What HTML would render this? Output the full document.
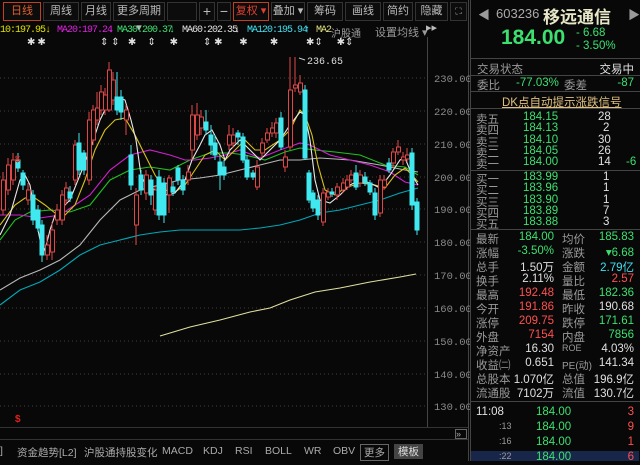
<!DOCTYPE html>
<html><head><meta charset="utf-8"><style>
*{margin:0;padding:0;box-sizing:border-box}
body{width:640px;height:461px;background:#080808;overflow:hidden;position:relative;font-family:"Liberation Sans","Noto Sans CJK SC",sans-serif;font-size:11px;color:#c8c8c8}
.a{position:absolute;white-space:nowrap}
.tb{position:absolute;top:2px;height:19px;border:1px solid #333;background:#0c0c0c;color:#bbb;font-size:11px;line-height:17px;text-align:center}
.r{color:#ff5050}.g{color:#3ce070}.w{color:#e0e0e0}.y{color:#e0e000}.c{color:#40e0f0}.gr{color:#9a9a9a}
.mono{font-family:"Liberation Mono","Noto Sans CJK SC",monospace}
.lg{position:absolute;top:25px;font-family:"Liberation Mono",monospace;font-size:10px;letter-spacing:-1px;white-space:nowrap}
.rp{position:absolute;left:470px;top:0;width:170px;height:461px;border-left:1px solid #444}
.row{position:absolute;left:5px;width:160px;height:14px;font-size:11.5px}
.row span{position:absolute;top:0}
.hl{position:absolute;left:0;width:170px;height:1px;background:#444}
</style></head><body>
<div class="tb" style="left:3px;width:38px;color:#e06030;border-color:#c04020">日线</div>
<div class="tb" style="left:43px;width:36px">周线</div>
<div class="tb" style="left:81px;width:30px">月线</div>
<div class="tb" style="left:113px;width:52px">更多周期 ▾</div>
<div class="tb" style="left:167px;width:30px"></div>
<div class="tb" style="left:199px;width:16px;font-size:14px">+</div>
<div class="tb" style="left:217px;width:14px;font-size:14px">−</div>
<div class="tb" style="left:233px;width:36px;color:#e04030;border-color:#c04020">复权 ▾</div>
<div class="tb" style="left:271px;width:34px">叠加 ▾</div>
<div class="tb" style="left:307px;width:36px">筹码</div>
<div class="tb" style="left:345px;width:36px">画线</div>
<div class="tb" style="left:383px;width:30px">简约</div>
<div class="tb" style="left:415px;width:33px">隐藏▸▸</div>
<div class="tb" style="left:450px;width:17px;font-size:9px">⛶</div>
<span class="lg y" style="left:0">10:197.95</span><span class="lg y" style="left:45px">↓</span>
<span class="lg" style="left:57px;color:#e020e0">MA20:197.24</span><span class="lg" style="left:108px;color:#e020e0">↓</span>
<span class="lg g" style="left:117px">MA30:200.37</span><span class="lg g" style="left:169px">↓</span>
<span class="lg w" style="left:182px">MA60:202.35</span><span class="lg w" style="left:234px">↓</span>
<span class="lg c" style="left:247px">MA120:195.94</span><span class="lg c" style="left:304px">↑</span>
<span class="lg" style="left:316px;color:#e0e080">MA2</span><span class="lg gr" style="left:331px;letter-spacing:0;font-family:'Noto Sans CJK SC',sans-serif">沪股通</span>
<div class="a gr" style="top:24px;left:375px;font-size:11px">设置均线 ▾</div>
<div class="a w" style="top:37px;left:27px;font-size:10px;letter-spacing:2px">✱✱</div>
<div class="a w" style="top:37px;left:100px;font-size:10px">⇕ ⇕ &nbsp; ✱ &nbsp; &nbsp;⇕ &nbsp; &nbsp; ✱ &nbsp; &nbsp; &nbsp; &nbsp; ⇕ ✱ &nbsp; &nbsp; &nbsp;✱ &nbsp; &nbsp; &nbsp; &nbsp;✱ &nbsp; &nbsp; &nbsp; &nbsp; &nbsp;✱⇕ &nbsp; &nbsp; ✱⇕</div>
<svg class="a" style="left:0;top:0" width="470" height="461">
<g stroke="#4a3a3a" stroke-dasharray="1 3" stroke-width="1">
<line x1="0" y1="78" x2="427" y2="78"/><line x1="0" y1="111" x2="427" y2="111"/><line x1="0" y1="144" x2="427" y2="144"/><line x1="0" y1="177" x2="427" y2="177"/><line x1="0" y1="209" x2="427" y2="209"/><line x1="0" y1="242" x2="427" y2="242"/><line x1="0" y1="275" x2="427" y2="275"/><line x1="0" y1="308" x2="427" y2="308"/><line x1="0" y1="341" x2="427" y2="341"/><line x1="0" y1="374" x2="427" y2="374"/><line x1="0" y1="406" x2="427" y2="406"/>
</g>
<line x1="427.5" y1="37" x2="427.5" y2="427" stroke="#444"/>
<line x1="468.5" y1="0" x2="468.5" y2="461" stroke="#444"/>
<line x1="0" y1="427.5" x2="468" y2="427.5" stroke="#333"/>
<line x1="0" y1="439.5" x2="468" y2="439.5" stroke="#333"/>
<g fill="#8a8a8a" font-family="Liberation Mono" font-size="10.5">
<text x="434" y="82">230.00</text><text x="434" y="115">220.00</text><text x="434" y="148">210.00</text><text x="434" y="181">200.00</text><text x="434" y="213">190.00</text><text x="434" y="246">180.00</text><text x="434" y="279">170.00</text><text x="434" y="312">160.00</text><text x="434" y="345">150.00</text><text x="434" y="378">140.00</text><text x="434" y="410">130.00</text>
</g>
<g fill="none" stroke-width="1.1">
<polyline stroke="#00a8b8" points="0,305 20,290 40,282 60,270 80,255 100,245 120,240 140,235 160,232 180,230 200,230 220,230 240,230 260,228 280,225 300,220 320,213 340,210 360,205 380,200 400,193 418,188"/>
<polyline stroke="#b8b8b8" points="0,290 20,278 40,270 60,260 80,245 100,220 120,200 140,190 160,185 180,180 200,178 220,175 240,170 260,165 280,160 300,160 320,158 350,160 380,165 405,170 418,172"/>
<polyline stroke="#e0e0a0" points="160,336 190,327 220,320 250,312 270,308 290,300 315,292 340,288 370,282 400,277 416,274"/>
<polyline stroke="#20c020" points="0,240 15,220 30,212 50,210 70,212 90,205 110,180 130,170 150,167 170,170 190,160 210,153 230,153 245,155 265,160 285,152 300,148 315,150 335,152 360,155 385,165 405,167 418,175"/>
<polyline stroke="#d020d0" points="0,215 20,215 40,218 60,215 75,205 90,195 110,170 130,155 150,150 170,155 185,160 195,160 210,158 225,155 240,150 260,158 280,150 300,143 310,145 330,155 350,160 370,165 390,172 405,182 418,185"/>
<polyline stroke="#d8c020" points="0,225 15,205 25,198 35,198 45,205 55,213 65,215 75,205 85,180 95,150 105,130 115,120 125,118 135,135 145,155 155,175 165,190 175,192 185,185 195,170 205,155 215,150 225,160 235,150 245,140 255,150 265,150 280,140 290,130 300,110 305,115 312,135 318,165 325,190 335,195 345,188 360,183 375,185 385,188 395,175 405,168 412,175 418,182"/>
<polyline stroke="#e8e8e8" points="0,235 10,215 20,180 25,175 30,185 35,215 40,240 45,250 50,230 55,215 60,210 70,200 80,175 90,150 100,120 110,100 117,97 125,100 131,120 136,140 141,175 146,185 155,190 165,195 175,193 185,180 192,160 200,145 205,135 212,130 220,145 225,160 230,150 240,140 250,150 260,160 270,150 280,140 290,125 300,112 305,115 310,140 315,180 320,200 330,203 340,195 350,185 360,180 370,183 380,188 390,175 400,160 405,158 412,175 418,185"/>
</g>
<g stroke-width="1">
<g stroke="#e04848" fill="#080808">
<path d="M3,172V215M8,158V195M13,153V185M28,183V205M47,235V260M52,222V260M57,204V225M62,190V225M66,182V205M75,140V185M89,112V185M93,105V145M97,92V125M101,85V115M105,88V115M109,62V112M113,72V105M126,105V135M136,188V245M146,170V200M155,185V215M169,175V213M188,165V185M192,105V160M197,103V140M201,110V135M229,125V150M233,128V148M257,160V190M262,138V158M267,128V143M272,122V137M276,118V138M285,150V172M290,57V150M295,57V92M300,75V95M323,188V226M328,188V200M337,183V200M343,178V193M347,175V190M351,170V183M360,170V187M380,175V217M384,175V190M393,148V168M398,140V155M403,152V165M407,148V162"/>
<rect x="1.5" y="180" width="4" height="30"/><rect x="6.5" y="165" width="4" height="25"/><rect x="11.5" y="160" width="4" height="20"/><rect x="26.5" y="190" width="4" height="10"/><rect x="45.5" y="245" width="4" height="10"/><rect x="50.5" y="230" width="4" height="22"/><rect x="55.5" y="210" width="4" height="10"/><rect x="60.5" y="195" width="4" height="25"/><rect x="64.5" y="188" width="4" height="12"/><rect x="73.5" y="145" width="4" height="35"/><rect x="87.5" y="120" width="4" height="60"/><rect x="91.5" y="110" width="4" height="30"/><rect x="95.5" y="108" width="4" height="12"/><rect x="99.5" y="92" width="4" height="18"/><rect x="103.5" y="95" width="4" height="15"/><rect x="107.5" y="70" width="4" height="40"/><rect x="111.5" y="80" width="4" height="20"/><rect x="124.5" y="110" width="4" height="10"/><rect x="134.5" y="195" width="4" height="30"/><rect x="144.5" y="175" width="4" height="18"/><rect x="153.5" y="190" width="4" height="20"/><rect x="167.5" y="178" width="4" height="17"/><rect x="186.5" y="172" width="4" height="8"/><rect x="190.5" y="115" width="4" height="35"/><rect x="195.5" y="115" width="4" height="20"/><rect x="199.5" y="117" width="4" height="11"/><rect x="227.5" y="135" width="4" height="10"/><rect x="231.5" y="135" width="4" height="8"/><rect x="255.5" y="167" width="4" height="20"/><rect x="260.5" y="143" width="4" height="10"/><rect x="265.5" y="133" width="4" height="7"/><rect x="270.5" y="128" width="4" height="5"/><rect x="274.5" y="123" width="4" height="10"/><rect x="283.5" y="157" width="4" height="10"/><rect x="288.5" y="90" width="4" height="57"/><rect x="293.5" y="85" width="4" height="3"/><rect x="298.5" y="83" width="4" height="9"/><rect x="321.5" y="193" width="4" height="29"/><rect x="326.5" y="192" width="4" height="5"/><rect x="335.5" y="187" width="4" height="8"/><rect x="341.5" y="183" width="4" height="7"/><rect x="345.5" y="180" width="4" height="7"/><rect x="349.5" y="175" width="4" height="5"/><rect x="358.5" y="175" width="4" height="8"/><rect x="378.5" y="180" width="4" height="33"/><rect x="382.5" y="180" width="4" height="7"/><rect x="391.5" y="152" width="4" height="11"/><rect x="396.5" y="147" width="4" height="5"/><rect x="401.5" y="157" width="4" height="3"/><rect x="405.5" y="155" width="4" height="4"/>
</g>
<g stroke="#40e8f0" fill="#40e8f0">
<path d="M18,153V172M23,170V190M33,190V225M38,205V232M42,220V262M70,186V202M79,133V175M84,150V175M117,72V115M121,90V120M131,145V190M141,170V195M151,175V205M159,170V220M164,178V223M173,182V196M178,165V185M183,175V195M206,110V135M211,125V155M215,135V160M220,155V190M224,160V180M238,130V145M243,133V163M247,155V180M253,170V180M281,112V150M305,85V160M309,170V203M313,190V212M318,195V220M332,188V197M356,165V190M365,172V186M370,180V195M375,188V220M389,158V173M412,148V210M417,198V235"/>
<rect x="16" y="160" width="4" height="8"/><rect x="21" y="173" width="4" height="12"/><rect x="31" y="195" width="4" height="25"/><rect x="36" y="210" width="4" height="18"/><rect x="40" y="225" width="4" height="30"/><rect x="68" y="192" width="4" height="6"/><rect x="77" y="143" width="4" height="27"/><rect x="82" y="153" width="4" height="17"/><rect x="115" y="97" width="4" height="13"/><rect x="119" y="97" width="4" height="15"/><rect x="129" y="155" width="4" height="30"/><rect x="139" y="175" width="4" height="15"/><rect x="149" y="180" width="4" height="15"/><rect x="157" y="177" width="4" height="38"/><rect x="162" y="183" width="4" height="32"/><rect x="171" y="187" width="4" height="5"/><rect x="176" y="168" width="4" height="12"/><rect x="181" y="180" width="4" height="10"/><rect x="204" y="122" width="4" height="8"/><rect x="209" y="135" width="4" height="10"/><rect x="213" y="143" width="4" height="12"/><rect x="218" y="162" width="4" height="13"/><rect x="222" y="167" width="4" height="8"/><rect x="236" y="133" width="4" height="4"/><rect x="241" y="137" width="4" height="23"/><rect x="245" y="160" width="4" height="17"/><rect x="251" y="173" width="4" height="4"/><rect x="279" y="118" width="4" height="29"/><rect x="303" y="90" width="4" height="68"/><rect x="307" y="173" width="4" height="27"/><rect x="311" y="193" width="4" height="15"/><rect x="316" y="200" width="4" height="15"/><rect x="330" y="192" width="4" height="2"/><rect x="354" y="173" width="4" height="14"/><rect x="363" y="177" width="4" height="6"/><rect x="368" y="183" width="4" height="9"/><rect x="373" y="193" width="4" height="22"/><rect x="387" y="163" width="4" height="7"/><rect x="410" y="153" width="4" height="52"/><rect x="415" y="202" width="4" height="28"/>
</g>
</g>
<path d="M299,58 L305,60" stroke="#ccc"/>
<text x="307" y="64" fill="#ddd" font-family="Liberation Mono" font-size="10">236.65</text>
<text x="15" y="422" fill="#e02020" font-size="10" font-weight="bold">$</text>
<text x="15" y="162" fill="#e02020" font-size="9" font-weight="bold">$</text>
<rect x="455.5" y="429.5" width="11" height="9" fill="none" stroke="#666"/>
<text x="456" y="437" fill="#aaa" font-size="9">»</text>
</svg>
<div class="a" style="top:445px;left:0;font-size:10.5px;color:#aaa">
<span style="position:absolute;left:0">]</span>
<span style="position:absolute;left:17px">资金趋势[L2]</span>
<span style="position:absolute;left:84px">沪股通持股变化</span>
<span style="position:absolute;left:162px">MACD</span>
<span style="position:absolute;left:203px">KDJ</span>
<span style="position:absolute;left:235px">RSI</span>
<span style="position:absolute;left:265px">BOLL</span>
<span style="position:absolute;left:304px">WR</span>
<span style="position:absolute;left:333px">OBV</span>
<span style="position:absolute;left:360px;top:-1px;border:1px solid #666;padding:0 3px">更多</span>
<span style="position:absolute;left:394px;top:-1px;background:#444;color:#ddd;padding:0 4px">模板</span>
</div>
<div class="rp">
<div class="a gr" style="left:7px;top:6px;font-size:12px">◀</div>
<div class="a gr" style="left:157px;top:6px;font-size:12px">▶</div>
<div class="a" style="left:25px;top:6px;font-size:13px;color:#aaa">603236</div>
<div class="a" style="left:72px;top:3px;font-size:17px;font-weight:bold;color:#e8e8c8">移远通信</div>
<div class="a g" style="left:30px;top:26px;font-size:21px;font-weight:bold">184.00</div>
<div class="a g" style="left:105px;top:27px;font-size:11.5px">- 6.68</div>
<div class="a g" style="left:105px;top:40px;font-size:11.5px">- 3.50%</div>
<div class="hl" style="top:58px"></div>
<div class="row" style="top:61px"><span class="gr" style="left:1px">交易状态</span><span class="w" style="right:2px">交易中</span></div>
<div class="hl" style="top:75px"></div>
<div class="row" style="top:77px"><span class="gr" style="left:1px">委比</span><span class="g" style="left:40px">-77.03%</span><span class="gr" style="left:88px">委差</span><span class="g" style="right:2px">-87</span></div>
<div class="hl" style="top:91px"></div>
<div class="row" style="top:94px"><span style="left:26px;color:#e0c080;text-decoration:underline">DK点自动提示涨跌信号</span></div>
<div class="hl" style="top:108px"></div>
<div class="row" style="top:111px"><span class="gr">卖五</span><span class="g" style="left:47px">184.15</span><span class="w" style="left:122px">28</span></div>
<div class="row" style="top:122px"><span class="gr">卖四</span><span class="g" style="left:47px">184.13</span><span class="w" style="left:127px">2</span></div>
<div class="row" style="top:134px"><span class="gr">卖三</span><span class="g" style="left:47px">184.10</span><span class="w" style="left:122px">30</span></div>
<div class="row" style="top:145px"><span class="gr">卖二</span><span class="g" style="left:47px">184.05</span><span class="w" style="left:122px">26</span></div>
<div class="row" style="top:156px"><span class="gr">卖一</span><span class="g" style="left:47px">184.00</span><span class="w" style="left:122px">14</span><span class="g" style="left:150px">-6</span></div>
<div class="hl" style="top:170px"></div>
<div class="row" style="top:171px"><span class="gr">买一</span><span class="g" style="left:47px">183.99</span><span class="w" style="left:127px">1</span></div>
<div class="row" style="top:182px"><span class="gr">买二</span><span class="g" style="left:47px">183.96</span><span class="w" style="left:127px">1</span></div>
<div class="row" style="top:194px"><span class="gr">买三</span><span class="g" style="left:47px">183.90</span><span class="w" style="left:127px">1</span></div>
<div class="row" style="top:205px"><span class="gr">买四</span><span class="g" style="left:47px">183.89</span><span class="w" style="left:127px">7</span></div>
<div class="row" style="top:216px"><span class="gr">买五</span><span class="g" style="left:47px">183.88</span><span class="w" style="left:127px">3</span></div>
<div class="hl" style="top:229px"></div>
<div class="row" style="top:231px"><span class="gr">最新</span><span class="g" style="right:82px">184.00</span><span class="gr" style="left:86px">均价</span><span class="g" style="right:2px">185.83</span></div>
<div class="row" style="top:245px"><span class="gr">涨幅</span><span class="g" style="right:82px">-3.50%</span><span class="gr" style="left:86px">涨跌</span><span class="g" style="right:2px">▾6.68</span></div>
<div class="row" style="top:259px"><span class="gr">总手</span><span class="w" style="right:82px">1.50万</span><span class="gr" style="left:86px">金额</span><span class="c" style="right:2px">2.79亿</span></div>
<div class="row" style="top:273px"><span class="gr">换手</span><span class="w" style="right:82px">2.11%</span><span class="gr" style="left:86px">量比</span><span class="r" style="right:2px">2.57</span></div>
<div class="row" style="top:287px"><span class="gr">最高</span><span class="r" style="right:82px">192.48</span><span class="gr" style="left:86px">最低</span><span class="g" style="right:2px">182.36</span></div>
<div class="row" style="top:301px"><span class="gr">今开</span><span class="r" style="right:82px">191.86</span><span class="gr" style="left:86px">昨收</span><span class="w" style="right:2px">190.68</span></div>
<div class="row" style="top:315px"><span class="gr">涨停</span><span class="r" style="right:82px">209.75</span><span class="gr" style="left:86px">跌停</span><span class="g" style="right:2px">171.61</span></div>
<div class="row" style="top:329px"><span class="gr">外盘</span><span class="r" style="right:82px">7154</span><span class="gr" style="left:86px">内盘</span><span class="g" style="right:2px">7856</span></div>
<div class="row" style="top:343px"><span class="gr">净资产</span><span class="w" style="right:82px">16.30</span><span class="gr" style="left:86px;font-size:9px">ROE</span><span class="w" style="right:2px">4.03%</span></div>
<div class="row" style="top:357px"><span class="gr">收益㈡</span><span class="w" style="right:82px">0.651</span><span class="gr" style="left:86px;font-size:10px">PE(动)</span><span class="w" style="right:2px">141.34</span></div>
<div class="row" style="top:371px"><span class="gr">总股本</span><span class="w" style="right:82px">1.070亿</span><span class="gr" style="left:86px">总值</span><span class="w" style="right:2px">196.9亿</span></div>
<div class="row" style="top:385px"><span class="gr">流通股</span><span class="w" style="right:82px">7102万</span><span class="gr" style="left:86px">流值</span><span class="w" style="right:2px">130.7亿</span></div>
<div class="hl" style="top:401px"></div>
<div class="row" style="top:406px"><span class="w">11:08</span><span class="g" style="left:60px">184.00</span><span class="r" style="right:2px">3</span></div>
<div class="row" style="top:421px"><span class="gr" style="left:23px;font-size:9px">:13</span><span class="g" style="left:60px">184.00</span><span class="r" style="right:2px">9</span></div>
<div class="row" style="top:436px"><span class="gr" style="left:23px;font-size:9px">:16</span><span class="g" style="left:60px">184.00</span><span class="r" style="right:2px">1</span></div>
<div class="a" style="left:0;top:451px;width:168px;height:10px;background:#18264a"></div>
<div class="row" style="top:451px"><span class="gr" style="left:23px;font-size:9px">:22</span><span class="g" style="left:60px">184.00</span><span class="r" style="right:2px">6</span></div>
</div>
</body></html>
